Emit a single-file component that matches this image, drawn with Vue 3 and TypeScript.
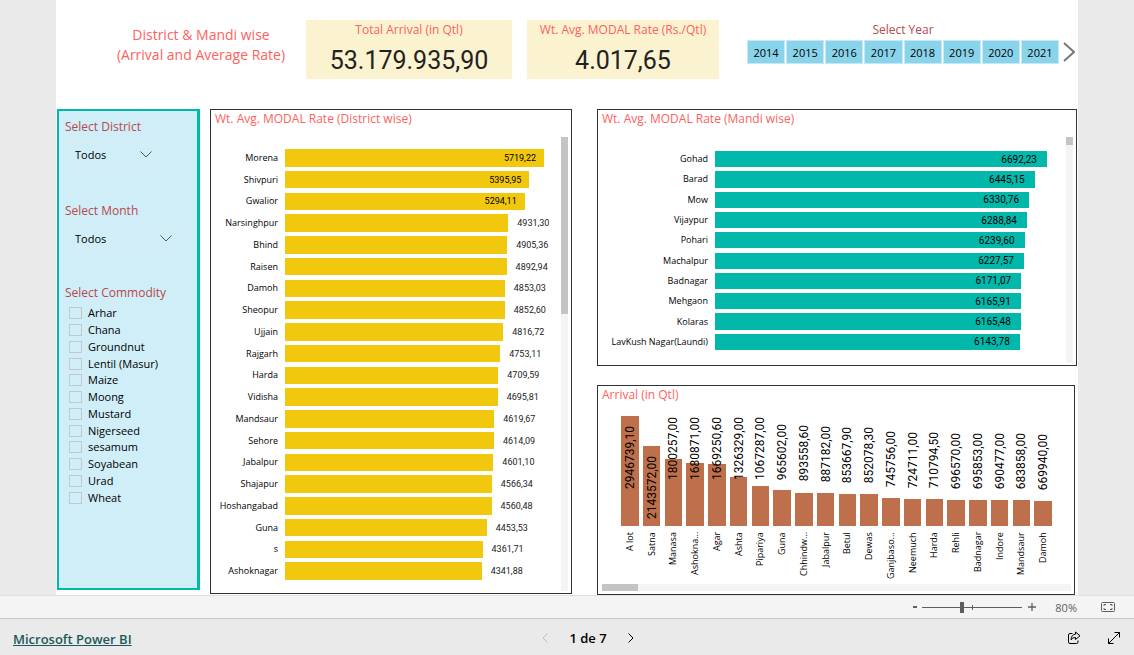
<script setup lang="ts">
import { ref } from 'vue'

interface Datum {
  name: string
  value: number
}

const years: number[] = [2014, 2015, 2016, 2017, 2018, 2019, 2020, 2021]

const commodities: string[] = [
  'Arhar', 'Chana', 'Groundnut', 'Lentil (Masur)', 'Maize', 'Moong',
  'Mustard', 'Nigerseed', 'sesamum', 'Soyabean', 'Urad', 'Wheat',
]

const districts: Datum[] = [
  { name: 'Morena', value: 5719.22 },
  { name: 'Shivpuri', value: 5395.95 },
  { name: 'Gwalior', value: 5294.11 },
  { name: 'Narsinghpur', value: 4931.3 },
  { name: 'Bhind', value: 4905.36 },
  { name: 'Raisen', value: 4892.94 },
  { name: 'Damoh', value: 4853.03 },
  { name: 'Sheopur', value: 4852.6 },
  { name: 'Ujjain', value: 4816.72 },
  { name: 'Rajgarh', value: 4753.11 },
  { name: 'Harda', value: 4709.59 },
  { name: 'Vidisha', value: 4695.81 },
  { name: 'Mandsaur', value: 4619.67 },
  { name: 'Sehore', value: 4614.09 },
  { name: 'Jabalpur', value: 4601.1 },
  { name: 'Shajapur', value: 4566.34 },
  { name: 'Hoshangabad', value: 4560.48 },
  { name: 'Guna', value: 4453.53 },
  { name: 's', value: 4361.71 },
  { name: 'Ashoknagar', value: 4341.88 },
]

const mandis: Datum[] = [
  { name: 'Gohad', value: 6692.23 },
  { name: 'Barad', value: 6445.15 },
  { name: 'Mow', value: 6330.76 },
  { name: 'Vijaypur', value: 6288.84 },
  { name: 'Pohari', value: 6239.6 },
  { name: 'Machalpur', value: 6227.57 },
  { name: 'Badnagar', value: 6171.07 },
  { name: 'Mehgaon', value: 6165.91 },
  { name: 'Kolaras', value: 6165.48 },
  { name: 'LavKush Nagar(Laundi)', value: 6143.78 },
]

const arrivals: Datum[] = [
  { name: 'A lot', value: 2946739.1 },
  { name: 'Satna', value: 2143572 },
  { name: 'Manasa', value: 1800257 },
  { name: 'Ashokna...', value: 1680871 },
  { name: 'Agar', value: 1669250.6 },
  { name: 'Ashta', value: 1326329 },
  { name: 'Pipariya', value: 1067287 },
  { name: 'Guna', value: 965602 },
  { name: 'Chhindw...', value: 893558.6 },
  { name: 'Jabalpur', value: 887182 },
  { name: 'Betul', value: 853667.9 },
  { name: 'Dewas', value: 852078.3 },
  { name: 'Ganjbaso...', value: 745756 },
  { name: 'Neemuch', value: 724711 },
  { name: 'Harda', value: 710794.5 },
  { name: 'Rehli', value: 696570 },
  { name: 'Badnagar', value: 695853 },
  { name: 'Indore', value: 690477 },
  { name: 'Mandsaur', value: 683858 },
  { name: 'Damoh', value: 669940 },
]

const district = ref('Todos')
const month = ref('Todos')
const zoom = ref(80)

const fmt = (n: number): string => n.toFixed(2).replace('.', ',')
const share = (d: Datum, all: Datum[]): string => `${(d.value / all[0].value) * 100}%`
</script>

<template>
  <div class="report">
    <main class="stage">
      <div class="canvas">
        <header class="top">
          <h1 class="title">District &amp; Mandi wise<br />(Arrival and Average Rate)</h1>
          <section class="card total">
            <h2>Total Arrival (in Qtl)</h2>
            <p>53.179.935,90</p>
          </section>
          <section class="card rate">
            <h2>Wt. Avg. MODAL Rate (Rs./Qtl)</h2>
            <p>4.017,65</p>
          </section>
          <section class="years">
            <h2>Select Year</h2>
            <div class="year-row">
              <button v-for="y in years" :key="y" type="button" class="year">{{ y }}</button>
              <button type="button" class="next-year" aria-label="Next years">
                <svg viewBox="0 0 12 20" width="12" height="20"><path d="M1 1 L11 10 L1 19" /></svg>
              </button>
            </div>
          </section>
        </header>

        <div class="body">
          <aside class="filters">
            <label class="filter-title" for="district">Select District</label>
            <div class="drop narrow">
              <select id="district" v-model="district"><option>Todos</option></select>
              <svg viewBox="0 0 12 7" width="12" height="7"><path d="M0.5 0.5 L6 6 L11.5 0.5" /></svg>
            </div>
            <label class="filter-title" for="month">Select Month</label>
            <div class="drop wide">
              <select id="month" v-model="month"><option>Todos</option></select>
              <svg viewBox="0 0 12 7" width="12" height="7"><path d="M0.5 0.5 L6 6 L11.5 0.5" /></svg>
            </div>
            <fieldset>
              <legend class="filter-title">Select Commodity</legend>
              <div class="checks">
                <label v-for="c in commodities" :key="c"><input type="checkbox" />{{ c }}</label>
              </div>
            </fieldset>
          </aside>

          <section class="panel district">
            <h2>Wt. Avg. MODAL Rate (District wise)</h2>
            <div class="scroller">
              <div class="bars">
                <div v-for="(d, i) in districts" :key="d.name" class="row">
                  <span class="name">{{ d.name }}</span>
                  <div class="track">
                    <div class="bar" :style="{ width: share(d, districts) }">
                      <span :class="i < 3 ? 'inside' : 'outside'">{{ fmt(d.value) }}</span>
                    </div>
                  </div>
                </div>
              </div>
              <div class="rail"><div class="thumb"></div></div>
            </div>
          </section>

          <div class="right">
            <section class="panel mandi">
              <h2>Wt. Avg. MODAL Rate (Mandi wise)</h2>
              <div class="scroller">
                <div class="bars">
                  <div v-for="d in mandis" :key="d.name" class="row">
                    <span class="name">{{ d.name }}</span>
                    <div class="track">
                      <div class="bar" :style="{ width: share(d, mandis) }">
                        <span class="inside">{{ fmt(d.value) }}</span>
                      </div>
                    </div>
                  </div>
                </div>
                <div class="rail"><div class="thumb"></div></div>
              </div>
            </section>

            <section class="panel arrival">
              <h2>Arrival (in Qtl)</h2>
              <div class="columns">
                <div v-for="(d, i) in arrivals" :key="d.name" class="column">
                  <div class="plot">
                    <div class="pillar" :style="{ height: share(d, arrivals) }">
                      <span v-if="i < 2" class="amount within">{{ fmt(d.value) }}</span>
                    </div>
                    <span
                      v-if="i >= 2"
                      class="amount above"
                      :style="{ bottom: `min(${share(d, arrivals)} + 11px, 46px)` }"
                    >{{ fmt(d.value) }}</span>
                  </div>
                  <span class="place">{{ d.name }}</span>
                </div>
              </div>
              <div class="rail"><div class="thumb"></div></div>
            </section>
          </div>
        </div>
      </div>
    </main>

    <div class="zoombar">
      <button type="button" aria-label="Zoom out">
        <svg viewBox="0 0 10 10" width="10" height="10"><path d="M3 5 H7" stroke-width="2" /></svg>
      </button>
      <input v-model="zoom" type="range" min="10" max="190" aria-label="Zoom" />
      <button type="button" aria-label="Zoom in">
        <svg viewBox="0 0 10 10" width="10" height="10"><path d="M1 5 H9 M5 1 V9" stroke-width="1.3" /></svg>
      </button>
      <span class="percent">{{ zoom }}%</span>
      <button type="button" aria-label="Fit to page">
        <svg viewBox="0 0 14 10" width="14" height="10">
          <rect x="0.5" y="0.5" width="13" height="9" rx="1" />
          <path d="M5 2.5 H3 V4 M9 2.5 H11 V4 M3 6 V7.5 H5 M11 6 V7.5 H9" />
        </svg>
      </button>
    </div>

    <footer class="footer">
      <div><a href="#">Microsoft Power BI</a></div>
      <nav class="pager" aria-label="Pages">
        <button type="button" disabled aria-label="Previous page">
          <svg viewBox="0 0 6 10" width="6" height="10"><path d="M5.5 0.5 L1 5 L5.5 9.5" /></svg>
        </button>
        <span>1 de 7</span>
        <button type="button" aria-label="Next page">
          <svg viewBox="0 0 6 10" width="6" height="10"><path d="M0.5 0.5 L5 5 L0.5 9.5" /></svg>
        </button>
      </nav>
      <div class="actions">
        <button type="button" aria-label="Share">
          <svg viewBox="0 0 14 14" width="14" height="14">
            <path d="M5.5 2.5 H3 Q1.5 2.5 1.5 4 V11 Q1.5 12.5 3 12.5 H9.5 Q11 12.5 11 11 V9.5" />
            <path d="M8.5 1 L13 4.8 L8.5 8.5 V6.5 Q5.5 6.3 4 8.8 Q4.3 3.5 8.5 3.2 Z" />
          </svg>
        </button>
        <button type="button" aria-label="Full screen">
          <svg viewBox="0 0 14 14" width="14" height="14">
            <path d="M1.5 12.5 L12.5 1.5 M7.5 1.5 H12.5 V6.5 M1.5 7.5 V12.5 H6.5" />
          </svg>
        </button>
      </div>
    </footer>
  </div>
</template>

<style>
body {
  margin: 0;
}
</style>

<style scoped>
* {
  box-sizing: border-box;
}

.report {
  display: flex;
  flex-direction: column;
  min-height: 100vh;
  font-family: "Open Sans", "Noto Sans", sans-serif;
  color: #000;
  background: #eaeaea;
}

h1, h2, p, fieldset {
  margin: 0;
  padding: 0;
  border: 0;
  font-weight: 400;
}

button {
  padding: 0;
  border: 0;
  background: none;
  font: inherit;
  color: inherit;
}

svg {
  display: block;
  fill: none;
  stroke: currentColor;
}

.stage {
  flex: 1;
  display: flex;
  padding: 0 56px;
}

.canvas {
  flex: 1;
  display: flex;
  flex-direction: column;
  min-width: 0;
  background: #fff;
}

/* Header */
.top {
  display: flex;
  align-items: flex-start;
  height: 109px;
  padding-top: 20px;
}

.title {
  flex: 210 1 0;
  margin-left: 40px;
  padding-top: 5px;
  font-size: 14px;
  line-height: 20px;
  text-align: center;
  white-space: nowrap;
  color: #fd625e;
}

.card {
  height: 59px;
  background: #fbf2d0;
  text-align: center;
  white-space: nowrap;
}

.card h2, .panel h2, .years h2 {
  font-size: 12px;
  line-height: 20px;
  color: #fd625e;
}

.card p {
  font: 400 25px/42px Roboto, sans-serif;
  color: #222;
}

.total {
  flex: 206 1 0;
}

.rate {
  flex: 192 1 0;
  margin-left: 15px;
}

.years {
  flex: 331 1 0;
  margin-left: 28px;
}

.years h2 {
  margin-right: 19px;
  text-align: center;
  color: #b9484a;
}

.year-row {
  display: flex;
  gap: 1px;
  height: 24px;
}

.year {
  flex: 1;
  border: 1px solid #c4e9f5;
  background: #8ad4eb;
  font-size: 11px;
}

.next-year {
  flex: 0 0 18px;
  display: flex;
  align-items: center;
  justify-content: center;
  color: #777;
}

.next-year svg {
  stroke-width: 2;
}

/* Body */
.body {
  flex: 1;
  display: grid;
  grid-template-columns: 143px 372fr 505fr;
  padding: 0 1px;
}

.filters {
  margin-bottom: 5px;
  padding: 6px;
  border: 3px solid #01b8aa;
  border-width: 2px 3px 2px 2px;
  background: #d0eef8;
}

.filter-title {
  display: block;
  padding: 0;
  font-size: 12px;
  line-height: 20px;
  color: #b9484a;
}

.drop {
  display: flex;
  align-items: center;
  height: 24px;
  margin: 5px 0 35px 4px;
  padding-right: 4px;
  border: 1px solid #dce9ef;
}

.drop svg {
  flex: none;
  color: #555;
}

.narrow {
  width: 88px;
}

.wide {
  width: 108px;
}

select {
  flex: 1;
  min-width: 0;
  height: 22px;
  padding: 0 5px;
  border: 0;
  appearance: none;
  background: none;
  font: inherit;
  font-size: 11px;
  color: #000;
}

fieldset {
  margin-top: -2px;
}

.checks {
  display: grid;
  grid-template-rows: repeat(12, 1fr);
  height: 203px;
  padding: 2px 0 0 4px;
}

.checks label {
  display: flex;
  align-items: center;
  gap: 6px;
  font-size: 11px;
  line-height: 16px;
  white-space: nowrap;
}

.checks input {
  width: 13px;
  height: 12px;
  margin: 0;
  border: 1px solid #c5c8ca;
  appearance: none;
}

.checks input:checked {
  background: #555;
}

/* Chart panels */
.panel {
  display: flex;
  flex-direction: column;
  border: 1px solid #333;
  background: #fff;
}

.panel h2 {
  height: 27px;
  padding-left: 4px;
  line-height: 18px;
  white-space: nowrap;
}

.scroller {
  flex: 1;
  display: flex;
  padding: 0 3px 2px 0;
}

.rail {
  flex: 0 0 7px;
  background: #f4f4f4;
}

.thumb {
  background: #c4c4c4;
}

.bars {
  flex: 1;
  display: grid;
  grid-auto-rows: 1fr;
}

.row {
  display: grid;
  gap: 7px;
  align-items: center;
}

.name {
  font-size: 9px;
  line-height: 14px;
  text-align: right;
  white-space: nowrap;
}

.track {
  display: flex;
  align-items: center;
  height: 100%;
}

.bar {
  display: flex;
  align-items: center;
  height: 80%;
  font-family: Roboto, sans-serif;
  white-space: nowrap;
}

.inside {
  margin-left: auto;
}

.outside {
  margin-left: calc(100% + 9px);
  color: #222;
}

.district {
  margin: 0 0 1px 10px;
}

.district .bars {
  padding: 10px 17px 9px 0;
}

.district .row {
  grid-template-columns: 67px 1fr;
}

.district .bar {
  background: #f2c80f;
  font-size: 9px;
}

.district .inside {
  margin-right: 8px;
}

.district .thumb {
  height: 39%;
}

.right {
  display: grid;
  grid-template-rows: 257fr 210fr;
  gap: 19px;
  margin-left: 25px;
}

.mandi .bars {
  padding: 12px 19px 11px 0;
}

.mandi .row {
  grid-template-columns: 110px 1fr;
}

.mandi .bar {
  background: #01b8aa;
  font-size: 10px;
}

.mandi .inside {
  margin-right: 10px;
}

.mandi .thumb {
  height: 8px;
}

.arrival {
  margin-right: 2px;
}

.arrival h2 {
  height: 30px;
}

.columns {
  flex: 1;
  display: grid;
  grid-template-columns: repeat(20, 1fr);
  padding: 0 20px 0 21px;
}

.column {
  display: grid;
  grid-template-rows: 1fr 58px;
  justify-items: center;
}

.plot {
  position: relative;
  display: flex;
  align-items: flex-end;
  justify-content: center;
  width: 100%;
}

.pillar {
  position: relative;
  display: flex;
  justify-content: center;
  width: 80%;
  background: #be6f4b;
}

.amount {
  position: absolute;
  writing-mode: vertical-rl;
  transform: rotate(180deg);
  font: 12px/20px Roboto, sans-serif;
  white-space: nowrap;
}

.within {
  top: 10px;
}

.place {
  padding-bottom: 6px;
  writing-mode: vertical-rl;
  transform: rotate(180deg);
  text-align: right;
  font-size: 9px;
  line-height: 16px;
  white-space: nowrap;
}

.arrival .rail {
  margin: 0 3px 3px 4px;
}

.arrival .thumb {
  width: 36px;
  height: 7px;
}

/* Zoom bar */
.zoombar {
  display: flex;
  align-items: center;
  justify-content: flex-end;
  height: 23px;
  padding-right: 19px;
  border-top: 1px solid #e0e0e0;
  background: #f4f4f4;
  color: #605e5c;
}

.zoombar input {
  width: 100px;
  height: 13px;
  margin: 0 5px 0 2px;
  appearance: none;
  background:
    linear-gradient(#605e5c, #605e5c) center / 100% 1px no-repeat,
    linear-gradient(#605e5c, #605e5c) center / 1px 5px no-repeat;
}

.zoombar input::-webkit-slider-thumb {
  width: 4px;
  height: 11px;
  appearance: none;
  background: #605e5c;
}

.percent {
  margin: 0 24px 0 18px;
  font-size: 11px;
}

/* Footer */
.footer {
  display: grid;
  grid-template-columns: 1fr auto 1fr;
  align-items: center;
  height: 37px;
  padding: 2px 13px 0;
  border-top: 1px solid #c8c8c8;
}

.footer a {
  font-size: 13px;
  font-weight: 600;
  color: #1a5a5c;
}

.pager {
  display: flex;
  align-items: center;
  gap: 21px;
  margin-left: 42px;
  font-size: 13px;
  font-weight: 600;
}

.pager button:disabled {
  color: #bbb;
}

.actions {
  display: flex;
  justify-content: flex-end;
  gap: 26px;
}
</style>
